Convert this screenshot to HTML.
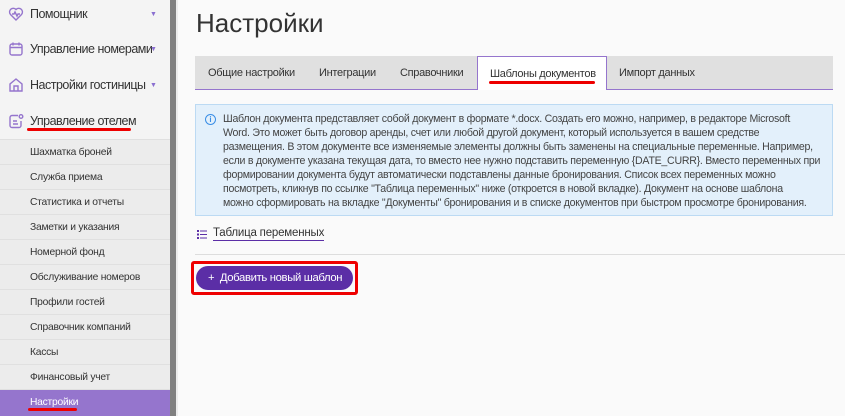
<!DOCTYPE html>
<html><head><meta charset="utf-8"><style>
*{box-sizing:border-box;margin:0;padding:0}
body{width:845px;height:416px;overflow:hidden;font-family:"Liberation Sans",sans-serif;background:#fafafa;position:relative;color:#333}
div{white-space:nowrap}
.sb{position:absolute;left:0;top:0;width:170px;height:416px;background:#f4f4f4}
.scroll{position:absolute;left:170px;top:0;width:6px;height:416px;background:#808080}
.gap{position:absolute;left:176px;top:0;width:2px;height:416px;background:#ececec}
.top{position:absolute;left:8px;font-size:12.5px;letter-spacing:-0.5px;color:#333;display:flex;align-items:center}
.top svg{margin-right:6px}
.arr{position:absolute;left:150px;font-size:7px;color:#8a6fd0}
.sub{position:absolute;left:0;width:170px;height:25px;background:#ececec;border-top:1px solid #e0e0e0;font-size:10.3px;letter-spacing:-0.25px;color:#333;padding-left:30px;line-height:26px}
.sub.act{background:#9575cd;color:#fff}
.red{position:absolute;height:3px;background:#e00;border-radius:2px}
h1{position:absolute;left:196px;top:8px;font-size:26px;font-weight:normal;color:#333}
.tabs{position:absolute;left:195px;top:56px;width:638px;height:34px;background:#e0e0e0;border-bottom:1px solid #9575cd}
.tab{position:absolute;top:0;height:34px;line-height:34px;font-size:11px;letter-spacing:-0.3px;color:#333}
.tab.act{background:#fff;border:1px solid #9575cd;border-bottom:none;height:34px}
.info{position:absolute;left:195px;top:104px;width:638px;height:112px;background:#e3f0fb;border:1px solid #bcdaf3;font-size:10.6px;line-height:14px;color:#444;padding:7px 0 0 27px;white-space:nowrap;letter-spacing:-0.27px;overflow:hidden}
.info .i{position:absolute;left:9px;top:9px;width:11px;height:11px;border:1px solid #3a8ee6;border-radius:50%;font-size:8px;line-height:9px;text-align:center;color:#3a8ee6;font-weight:bold;letter-spacing:0}
.link{position:absolute;left:197px;top:227px;font-size:11.5px;letter-spacing:-0.2px;color:#333;display:flex;align-items:center}
.link span{border-bottom:1px solid #5b2ea6;padding-bottom:1px;margin-left:6px}
.hr{position:absolute;left:195px;top:254px;width:650px;height:1px;background:#ddd}
.btnw{position:absolute;left:191px;top:261px;width:167px;height:34px;border:3px solid #e00;border-radius:3px}
.btn{position:absolute;left:196px;top:266px;width:157px;height:24px;background:#5b2ea6;border-radius:12px;color:#fff;font-size:11.3px;letter-spacing:-0.35px;line-height:24px;padding-left:12px}
</style></head><body>
<div class="sb"></div><div class="scroll"></div><div class="gap"></div>
<div class="top" style="top:6px"><svg width="16" height="16" viewBox="0 0 16 16" fill="none" stroke="#9575cd" stroke-width="1.4"><path d="M8 14 2.5 8.5A3.3 3.3 0 0 1 8 3.5a3.3 3.3 0 0 1 5.5 5Z"/><path d="M4 8h2l1-2 2 4 1-2h2"/></svg>Помощник</div><div class="arr" style="top:11px">▼</div>
<div class="top" style="top:41px"><svg width="16" height="16" viewBox="0 0 16 16" fill="none" stroke="#9575cd" stroke-width="1.4"><rect x="2" y="3" width="12" height="11" rx="2"/><path d="M2 6.5h12M5 1.5v3M11 1.5v3"/></svg>Управление номерами</div><div class="arr" style="top:46px">▼</div>
<div class="top" style="top:77px"><svg width="16" height="16" viewBox="0 0 16 16" fill="none" stroke="#9575cd" stroke-width="1.4"><path d="M2 14V7l6-5 6 5v7Z"/><path d="M6 14V9h4v5"/></svg>Настройки гостиницы</div><div class="arr" style="top:82px">▼</div>
<div class="top" style="top:113px"><svg width="16" height="16" viewBox="0 0 16 16" fill="none" stroke="#9575cd" stroke-width="1.4"><path d="M10 2.5H4a2 2 0 0 0-2 2v8a2 2 0 0 0 2 2h7a2 2 0 0 0 2-2V8"/><circle cx="13" cy="3.5" r="1.8"/><path d="M5 8h4M5 11h5"/></svg>Управление отелем</div>
<div class="red" style="left:27px;top:128px;width:104px"></div>
<div class="sub" style="top:139px">Шахматка броней</div>
<div class="sub" style="top:164px">Служба приема</div>
<div class="sub" style="top:189px">Статистика и отчеты</div>
<div class="sub" style="top:214px">Заметки и указания</div>
<div class="sub" style="top:239px">Номерной фонд</div>
<div class="sub" style="top:264px">Обслуживание номеров</div>
<div class="sub" style="top:289px">Профили гостей</div>
<div class="sub" style="top:314px">Справочник компаний</div>
<div class="sub" style="top:339px">Кассы</div>
<div class="sub" style="top:364px">Финансовый учет</div>
<div class="sub act" style="top:389px;height:27px">Настройки</div>
<div class="red" style="left:28px;top:408px;width:49px"></div>

<h1>Настройки</h1>
<div class="tabs">
<div class="tab" style="left:13px">Общие настройки</div>
<div class="tab" style="left:124px">Интеграции</div>
<div class="tab" style="left:205px">Справочники</div>
<div class="tab act" style="left:282px;width:130px;padding-left:12px">Шаблоны документов</div>
<div class="tab" style="left:424px">Импорт данных</div>
</div>
<div class="red" style="left:489px;top:81px;width:106px"></div>

<div class="info"><div class="i">i</div>Шаблон документа представляет собой документ в формате *.docx. Создать его можно, например, в редакторе Microsoft<br>Word. Это может быть договор аренды, счет или любой другой документ, который используется в вашем средстве<br>размещения. В этом документе все изменяемые элементы должны быть заменены на специальные переменные. Например,<br>если в документе указана текущая дата, то вместо нее нужно подставить переменную {DATE_CURR}. Вместо переменных при<br>формировании документа будут автоматически подставлены данные бронирования. Список всех переменных можно<br>посмотреть, кликнув по ссылке "Таблица переменных" ниже (откроется в новой вкладке). Документ на основе шаблона<br>можно сформировать на вкладке "Документы" бронирования и в списке документов при быстром просмотре бронирования.</div>

<div class="link"><svg width="10" height="9" viewBox="0 0 10 9" fill="#5b2ea6"><rect x="0" y="0" width="2" height="2"/><rect x="0" y="3.5" width="2" height="2"/><rect x="0" y="7" width="2" height="2"/><rect x="3" y="0.5" width="7" height="1"/><rect x="3" y="4" width="7" height="1"/><rect x="3" y="7.5" width="7" height="1"/></svg><span>Таблица переменных</span></div>
<div class="hr"></div>
<div class="btnw"></div>
<div class="btn">+&nbsp; Добавить новый шаблон</div>
</body></html>
